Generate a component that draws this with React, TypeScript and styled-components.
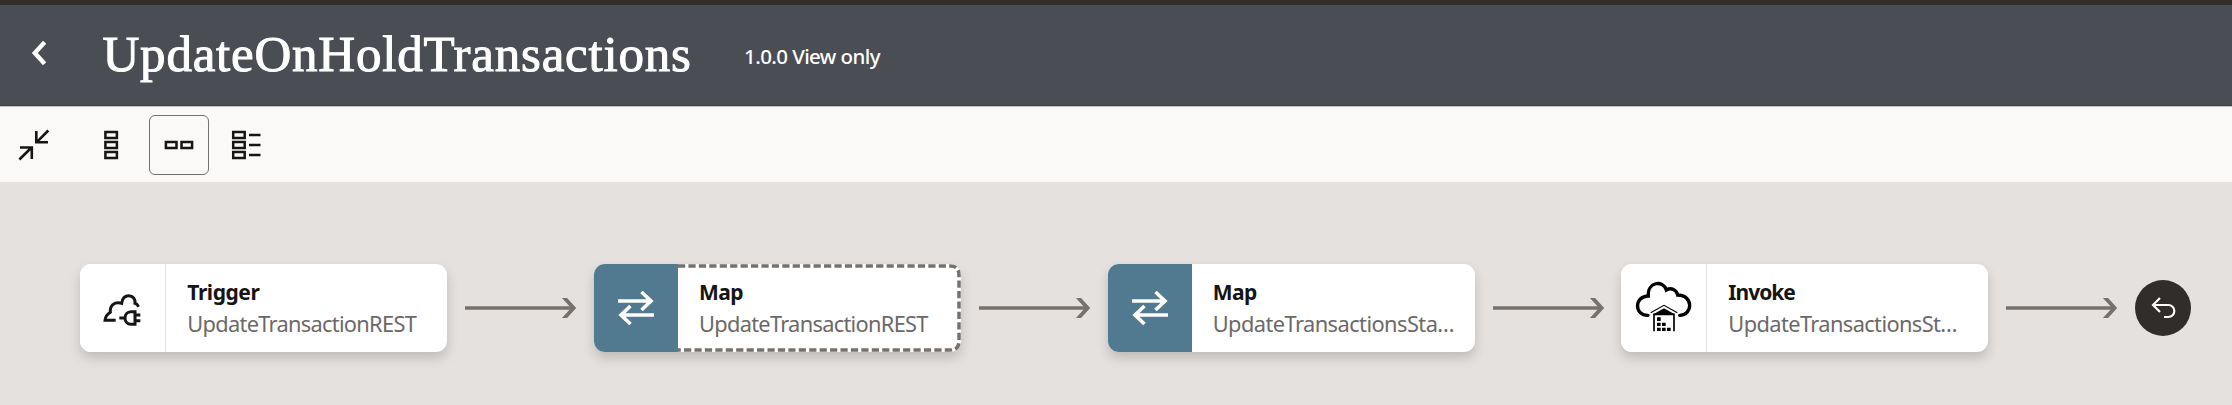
import React from "react";
import styled, { createGlobalStyle } from "styled-components";

const GlobalStyle = createGlobalStyle`
  * { box-sizing: border-box; }
  html, body { margin: 0; padding: 0; background: #e5e1de; }
  body { font-family: "Noto Sans", "Open Sans", sans-serif; overflow: hidden; }
`;

const Page = styled.div`
  display: flex;
  flex-direction: column;
  height: 405px;
  width: 100%;
`;

const Header = styled.header`
  display: flex;
  align-items: center;
  height: 107px;
  flex: none;
  border-top: 5px solid #312d2a;
  border-bottom: 1px solid #c9cabf;
  box-shadow: inset 0 -1px 0 #3d4145;
  background: #4b4d55;
  color: #fff;
`;

const BackButton = styled.button`
  display: flex;
  width: 24px;
  height: 30px;
  margin: 0 0 5px 27px;
  padding: 0;
  border: 0;
  background: none;
  color: inherit;
`;

const Title = styled.h1`
  margin: 0 0 2.6px 51.5px;
  width: 641.6px;
  font: 400 51px/60px "Liberation Serif", serif;
  letter-spacing: 0.78px;
  -webkit-text-stroke: 1px #fff;
  white-space: nowrap;
`;

const Version = styled.span`
  font-size: 20.5px;
  line-height: 28px;
  font-weight: 500;
  letter-spacing: -0.6px;
  white-space: nowrap;
`;

const Toolbar = styled.nav`
  display: flex;
  align-items: center;
  gap: 7.5px;
  height: 75px;
  flex: none;
  padding: 1px 0 0 4px;
  background: #fbf9f8;
`;

const ToolButton = styled.button<{ $active?: boolean; $spaced?: boolean }>`
  display: flex;
  align-items: center;
  justify-content: center;
  width: 60px;
  height: 60px;
  padding: 0;
  margin-right: ${(p) => (p.$spaced ? "9.7px" : "0")};
  border: 1px solid ${(p) => (p.$active ? "#74716e" : "transparent")};
  border-radius: 6px;
  background: none;
  color: #161513;
`;

const Canvas = styled.main`
  display: flex;
  align-items: flex-start;
  flex: 1;
  padding: 82px 0 0 80.3px;
  background: #e5e1de;
`;

const Flow = styled.div`
  display: flex;
  align-items: center;
  gap: 17.85px;
`;

const Card = styled.article`
  position: relative;
  display: flex;
  width: 367px;
  height: 87.7px;
  flex: none;
  border-radius: 11px;
  background: #fff;
  box-shadow: 0 6px 12px rgba(0, 0, 0, 0.17);
`;

const IconPane = styled.div<{ $filled?: boolean }>`
  display: flex;
  align-items: center;
  justify-content: center;
  width: ${(p) => (p.$filled ? "84px" : "86px")};
  border-radius: 11px 0 0 11px;
  border-right: ${(p) => (p.$filled ? "0" : "1.4px solid #e4e1e0")};
  background: ${(p) => (p.$filled ? "#517a91" : "#fff")};
  color: ${(p) => (p.$filled ? "#fff" : "#161513")};
`;

const CardText = styled.div`
  display: flex;
  flex-direction: column;
  flex: 1;
  min-width: 0;
  padding: 13px 0 0 21px;
`;

const CardTitle = styled.strong<{ $tracking: number }>`
  font-size: 21px;
  line-height: 31px;
  font-weight: 700;
  letter-spacing: ${(p) => p.$tracking}px;
  color: #161513;
`;

const CardName = styled.span<{ $tracking: number }>`
  font-size: 21.8px;
  line-height: 31px;
  letter-spacing: ${(p) => p.$tracking}px;
  color: #6b6967;
  white-space: nowrap;
`;

const SelectionOutline = styled.svg`
  position: absolute;
  top: 0;
  right: 0;
`;

const ConnectorArrow = styled.svg`
  display: block;
  flex: none;
`;

const EndNode = styled.div`
  display: flex;
  width: 56px;
  height: 56px;
  flex: none;
  border-radius: 50%;
  background: #312d2a;
`;

const Connector = () => (
  <ConnectorArrow width="111" height="20" viewBox="0 0 111 20" fill="none" stroke="#76716c">
    <path d="M0 10H108" strokeWidth="3.6" />
    <path d="M97.2 -2.5L108.6 10L97.2 22.5" strokeWidth="3.8" />
  </ConnectorArrow>
);

const CollapseIcon = () => (
  <svg width="32" height="32" viewBox="18 129 32 32" fill="none" stroke="currentColor" strokeWidth="2.6">
    <path d="M48.3 130.5L37 141.8M36.3 131V142.3H48M19.4 159.5L31 148M20 147.5H31.8V159" />
  </svg>
);

const VerticalIcon = () => (
  <svg width="30" height="30" fill="none" stroke="currentColor" strokeWidth="2.5">
    <path d="M9.4 2h11.5v6H9.4zM9.4 12h11.5v6H9.4zM9.4 22h11.5v6H9.4z" />
  </svg>
);

const HorizontalIcon = () => (
  <svg width="30" height="30" fill="none" stroke="currentColor" strokeWidth="2.5">
    <path d="M1.9 12h10.6v6H1.9zM17.5 12h10.6v6H17.5z" />
  </svg>
);

const ListIcon = () => (
  <svg width="30" height="30" fill="none" stroke="currentColor" strokeWidth="2.5">
    <path d="M2.2 2h11.5v6H2.2zM2.2 12h11.5v6H2.2zM2.2 22h11.5v6H2.2zM18 5h11.5M18 15h11.5M18 25h11.5" />
  </svg>
);

const SwapIcon = () => (
  <svg width="36" height="36" viewBox="0 0 36 36" fill="none" stroke="currentColor" strokeWidth="3.6">
    <path d="M0 11H33M23.5 2L33 11L23.5 20M36 25H3M12.5 16L3 25L12.5 34" />
  </svg>
);

const PlugCloudIcon = () => (
  <svg width="70" height="60" viewBox="-7 -7 210 180" fill="none" stroke="currentColor" strokeWidth="9">
    <path d="M76 120H44C45 108 52 101 60 96C58 77 71 63 94 69C96 54 104 46 115 46C128 46 136 57 134 69C139 70 142 74 145 79" />
    <path d="M87 113H103M134 94V132H122C98 132 98 94 122 94ZM134 104H150M134 121H150" />
  </svg>
);

const WarehouseCloudIcon = () => (
  <svg width="80" height="75" viewBox="-4 1 240 225" fill="none" stroke="#000">
    <path
      d="M68 137C25 137 27 79 69 79C66 36 113 30 123 61C138 52 154 61 157 76C205 76 203 137 163 137"
      strokeWidth="10"
      strokeLinecap="round"
    />
    <path d="M76 129L116 107L156 129" strokeWidth="3.4" />
    <path d="M84 134L116 116L148 134Z" fill="#000" stroke="none" />
    <path d="M86 185V134H146V185" strokeWidth="5" />
    <path
      d="M95 143h11v11h-11zM95 159h11v10h-11zM110 159h11v10h-11zM95 174h11v10h-11zM110 174h11v10h-11zM125 174h11v10h-11z"
      fill="#000"
      stroke="none"
    />
  </svg>
);

type Step = {
  kind: string;
  name: string;
  icon: React.ReactNode;
  filled?: boolean;
  selected?: boolean;
  kindTracking: number;
  nameTracking: number;
};

const steps: Step[] = [
  { kind: "Trigger", name: "UpdateTransactionREST", icon: <PlugCloudIcon />, kindTracking: -0.45, nameTracking: -0.7 },
  { kind: "Map", name: "UpdateTransactionREST", icon: <SwapIcon />, filled: true, selected: true, kindTracking: -0.5, nameTracking: -0.7 },
  { kind: "Map", name: "UpdateTransactionsSta…", icon: <SwapIcon />, filled: true, kindTracking: -0.5, nameTracking: -0.55 },
  { kind: "Invoke", name: "UpdateTransactionsSt…", icon: <WarehouseCloudIcon />, kindTracking: -1, nameTracking: -0.6 },
];

export default function App() {
  return (
    <Page>
      <GlobalStyle />
      <Header>
        <BackButton aria-label="Back">
          <svg width="24" height="30" fill="none" stroke="currentColor" strokeWidth="4.4">
            <path d="M17.6 4.2L7.8 15L17.6 25.8" />
          </svg>
        </BackButton>
        <Title>UpdateOnHoldTransactions</Title>
        <Version>1.0.0 View only</Version>
      </Header>
      <Toolbar>
        <ToolButton $spaced aria-label="Collapse"><CollapseIcon /></ToolButton>
        <ToolButton aria-label="Vertical layout"><VerticalIcon /></ToolButton>
        <ToolButton $active aria-label="Horizontal layout"><HorizontalIcon /></ToolButton>
        <ToolButton aria-label="List layout"><ListIcon /></ToolButton>
      </Toolbar>
      <Canvas>
        <Flow>
          {steps.map((step, i) => (
            <React.Fragment key={i}>
              <Card>
                <IconPane $filled={step.filled}>{step.icon}</IconPane>
                <CardText>
                  <CardTitle $tracking={step.kindTracking}>{step.kind}</CardTitle>
                  <CardName $tracking={step.nameTracking}>{step.name}</CardName>
                </CardText>
                {step.selected && (
                  <SelectionOutline width="283" height="88" fill="none" stroke="#76716c" strokeWidth="3.5">
                    <path d="M0 2H272Q281 2 281 11V77Q281 86 272 86H0" strokeDasharray="7.2 3.23" />
                  </SelectionOutline>
                )}
              </Card>
              <Connector />
            </React.Fragment>
          ))}
          <EndNode>
            <svg width="56" height="56" viewBox="0 0 168 168" fill="none" stroke="#fff" strokeWidth="6.5">
              <path d="M75 54L54 75L75 96M54 75H100A18 18 0 0 1 100 111H87" />
            </svg>
          </EndNode>
        </Flow>
      </Canvas>
    </Page>
  );
}
